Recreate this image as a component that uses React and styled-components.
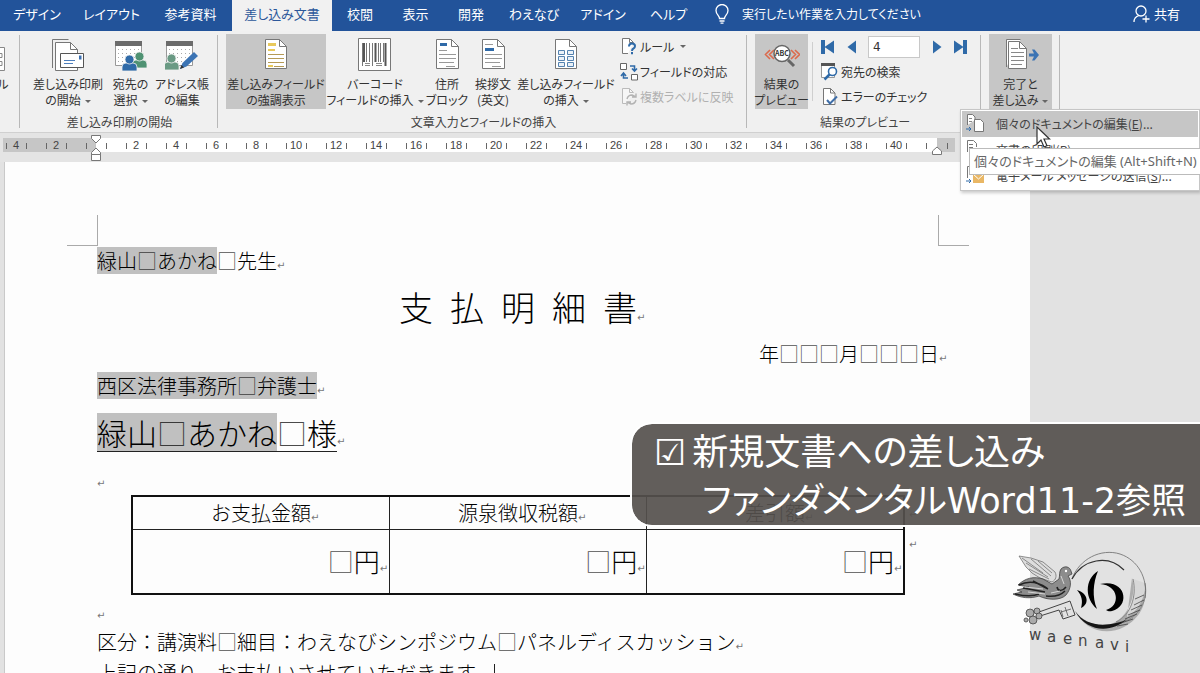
import React, { useState } from "react";
import styled, { createGlobalStyle } from "styled-components";

const TABS = [
  { name: "デザイン", width: 74 },
  { name: "レイアウト", width: 75 },
  { name: "参考資料", width: 83 },
  { name: "差し込み文書", width: 100 },
  { name: "校閲", width: 56 },
  { name: "表示", width: 55 },
  { name: "開発", width: 56 },
  { name: "わえなび", width: 70 },
  { name: "アドイン", width: 68 },
  { name: "ヘルプ", width: 63 },
];

const RULER_MARKS = Array.from({ length: 20 }, (_, i) => (i + 1) * 2);

/* ---------- icons ---------- */

const Sheet = ({ x = 0, y = 0, w = 21, h = 29 }) => (
  <>
    <path
      d={`M${x + 0.5} ${y + 0.5}h${w - 8}l7 7v${h - 8}h-${w - 1}z`}
      fill="#fff"
      stroke="#777"
    />
    <path
      d={`M${x + w - 7.5} ${y + 0.5}v7h7`}
      fill="none"
      stroke="#777"
    />
  </>
);

const Person = ({ x, y, color }) => (
  <g fill={color} stroke="#f0f0f0" strokeWidth="0.8">
    <path d={`M${x} ${y + 16}v-4q0-4 4-4h7q4 0 4 4v4z`} />
    <circle cx={x + 7.5} cy={y + 4.5} r="4.5" />
  </g>
);

const Grid = () => (
  <>
    <path d="M1.500 3.500h26v24h-26z" fill="#fff" stroke="#999" />
    <path d="M1 3h27v5H1z" fill="#6b6b6b" />
    <path
      d="M4 11.500h22M4 15.500h22M4 19.500h22M4 23.500h22"
      stroke="#aaa"
      strokeDasharray="1 3"
    />
  </>
);

const StartMergeIcon = () => (
  <svg width="34" height="34" viewBox="0 0 34 34">
    <path d="M1.500 30V1.500h16" fill="none" stroke="#777" />
    <path d="M4.500 32.500V4.500h15l7 7v21z" fill="#fff" stroke="#777" />
    <path d="M19.500 4.500v7h7" fill="none" stroke="#777" />
    <path d="M9.500 15.500h23v14h-23z" fill="#fff" stroke="#555" />
    <path d="M28 17.500h2.500v4H28z" fill="#3b6fb0" />
    <path d="M13 22.500h11M13 25.500h9" stroke="#4d7fbd" />
  </svg>
);

const RecipientsIcon = () => (
  <svg width="34" height="34" viewBox="0 0 34 34">
    <Grid />
    <Person x={18} y={14} color="#4f9273" />
    <Person x={8} y={17} color="#2f6aa8" />
  </svg>
);

const EditListIcon = () => (
  <svg width="34" height="34" viewBox="0 0 34 34">
    <Grid />
    <Person x={-1} y={16} color="#6a9a84" />
    <path d="M15 31l2.500-6L29 14l4 4-11.500 10.500z" fill="#3c74b4" />
    <path d="M15 31l1.500-4 2.500 2.500z" fill="#333" />
  </svg>
);

const HighlightIcon = () => (
  <svg width="34" height="34" viewBox="0 0 34 34">
    <Sheet x={6} y={1} w={22} h={30} />
    <path d="M9 5h8v3H9zM9 11h7v2H9z" fill="#e8c95c" />
    <path d="M9 16.500h16M9 20.500h16M9 24.500h16M15 28.500h10" stroke="#b59a55" />
    <path d="M9 27h5v2H9z" fill="#e8c95c" />
  </svg>
);

const BarcodeIcon = () => (
  <svg width="34" height="34" viewBox="0 0 34 34">
    <path d="M.5.5h32v32H.5z" fill="#fff" stroke="#777" />
    <path
      d="M6 5v19M17.500 5v19M27.500 5v23"
      stroke="#555"
      strokeWidth="2"
    />
    <path
      d="M8.500 5v19M11.500 5v19M14.500 5v23M20.500 5v19M22.500 5v19M25.500 5v19M4.500 5v23"
      stroke="#777"
    />
    <path d="M7 27.500h5M18 27.500h6M7 25.500h5M18 25.500h6" stroke="#888" />
  </svg>
);

const AddressIcon = () => (
  <svg width="34" height="34" viewBox="0 0 34 34">
    <Sheet x={6} y={1} w={23} h={30} />
    <path d="M10 5h7v3h-7z" fill="#2f6aa8" />
    <path d="M9 12.500h8M9 16.500h17M9 20.500h17M9 24.500h15M16 28.500h9" stroke="#999" />
  </svg>
);

const GreetingIcon = () => (
  <svg width="34" height="34" viewBox="0 0 34 34">
    <Sheet x={6} y={1} w={23} h={30} />
    <path d="M9 10h9v3H9z" fill="#2f6aa8" />
    <path d="M9 6.500h8M9 16.500h17M9 20.500h17M9 24.500h15M16 28.500h9" stroke="#999" />
  </svg>
);

const FieldIcon = () => (
  <svg width="34" height="34" viewBox="0 0 34 34">
    <Sheet x={6} y={1} w={22} h={30} />
    <path
      d="M9.500 12.500h6v4h-6zM18.500 12.500h6v4h-6zM9.500 18.500h6v4h-6zM18.500 18.500h6v4h-6zM9.500 24.500h6v4h-6zM18.500 24.500h6v4h-6z"
      fill="#eaf1f8"
      stroke="#5583b0"
    />
  </svg>
);

const PreviewIcon = () => (
  <svg width="36" height="34" viewBox="0 0 36 34">
    <path
      d="M6 12l-4.500 4.500L6 21M10 12l-4.500 4.500L10 21M27 12l4.500 4.500L27 21M31 12l4.500 4.500L31 21"
      fill="none"
      stroke="#dc6a4c"
      strokeWidth="1.600"
    />
    <path d="M24 22l6 6" stroke="#666" strokeWidth="3" />
    <circle cx="18" cy="15.500" r="8" fill="#fff" stroke="#666" strokeWidth="1.500" />
    <text x="18" y="18" textAnchor="middle" fontSize="7" fontWeight="700" fill="#333">
      ABC
    </text>
  </svg>
);

const FinishIcon = () => (
  <svg width="36" height="34" viewBox="0 0 36 34">
    <path d="M3.500 29V1.500h14" fill="#fff" stroke="#777" />
    <Sheet x={5} y={3} w={19} h={28} />
    <path d="M8 10.500h7M8 14.500h13M8 18.500h13M8 22.500h13M8 26.500h11" stroke="#888" />
    <path d="M26 15.500h5l-2-4h2.500l4.500 5.500-4.500 5.500H29l2-4h-5z" fill="#3c74b4" />
  </svg>
);

const RuleIcon = () => (
  <svg width="18" height="18" viewBox="0 0 18 18">
    <path d="M8 15.500H2.500V.5h7l4 4" fill="#fff" stroke="#777" />
    <path d="M9.500.5v4h4" fill="none" stroke="#777" />
    <path
      d="M9 8.500q0-3 3-3t3 2.500q0 1.800-1.500 2.500t-1.500 2.500M12 14v2.200"
      fill="none"
      stroke="#2f6aa8"
      strokeWidth="2"
    />
  </svg>
);

const MatchIcon = () => (
  <svg width="18" height="18" viewBox="0 0 18 18">
    <path d="M.5.5h6v6h-6zM11.500 11.500h6v5.500h-6z" fill="#fff" stroke="#666" />
    <path
      d="M10 3h4.500v4M12 5.500L14.500 8 17 5.500M8 15H3.500v-4M1 13l2.500-3L6 13"
      fill="none"
      stroke="#2f6aa8"
      strokeWidth="1.600"
    />
  </svg>
);

const LabelsIcon = () => (
  <svg width="18" height="18" viewBox="0 0 18 18">
    <path d="M6 15.500H2.500V.5h7l4 4" fill="#f6f6f6" stroke="#bbb" />
    <path d="M9.500.5v4h4" fill="none" stroke="#bbb" />
    <path
      d="M7 11q1-4 5-4l3 1.500M16 5.500v3.500h-4M16 12q-1 4-5 4l-3-1.500M7 17.500V14h4"
      fill="none"
      stroke="#b3b3b3"
      strokeWidth="1.400"
    />
  </svg>
);

const FindIcon = () => (
  <svg width="18" height="18" viewBox="0 0 18 18">
    <path d="M.5 1.500h13v13H.5z" fill="#fff" stroke="#999" />
    <path d="M0 0h14v3H0z" fill="#555" />
    <circle cx="11.500" cy="8.500" r="4" fill="#fff" stroke="#2f6aa8" strokeWidth="1.600" />
    <path d="M8.500 11.500L3.500 16.500" stroke="#2f6aa8" strokeWidth="2.500" />
  </svg>
);

const CheckIcon = () => (
  <svg width="18" height="18" viewBox="0 0 18 18">
    <path d="M2.500.5h7l4.500 4.500v11.500H2.500z" fill="#fff" stroke="#777" />
    <path d="M9.500.5V5H14" fill="none" stroke="#777" />
    <path d="M6 12l3 3.500 7-7" fill="none" stroke="#3f6ea8" strokeWidth="2" />
  </svg>
);

const NavIcon = ({ flip, bar }) => (
  <svg width="14" height="14" viewBox="0 0 14 14">
    <g fill="#2f6aa8" transform={flip ? "rotate(180 7 7)" : undefined}>
      {bar && <path d="M10 0h4v14h-4z" />}
      <path d={bar ? "M1 .5L10.500 7 1 13.500z" : "M3 .5L11.500 7 3 13.500z"} />
    </g>
  </svg>
);

const DocsIcon = () => (
  <svg width="20" height="20" viewBox="0 0 20 20">
    <path d="M2.500 12V1.500h5l2.500 2.500v3" fill="#fff" stroke="#777" />
    <path d="M4 5.500h3M4 8.500h3" stroke="#888" />
    <path d="M9.500 6.500h6l3 3v9h-9z" fill="#fff" stroke="#777" />
    <path d="M1 16h5M4 14l2 2-2 2" fill="none" stroke="#2f6aa8" />
  </svg>
);

const PrintIcon = () => (
  <svg width="20" height="20" viewBox="0 0 20 20">
    <path d="M2.500 13V1.500h6l3 3V8" fill="#fff" stroke="#777" />
    <path d="M4 5.500h4M4 8.500h4M8 12h9v5H8z" stroke="#777" fill="#eee" />
  </svg>
);

const MailIcon = () => (
  <svg width="20" height="20" viewBox="0 0 20 20">
    <path d="M2.500 13V1.500h6l3 3V8" fill="#fff" stroke="#777" />
    <path d="M1 16h5M4 14l2 2-2 2" fill="none" stroke="#2f6aa8" />
    <path d="M8 9h11v9H8z" fill="#e9b765" />
    <path d="M8 9l5.500 5L19 9" fill="none" stroke="#fff" />
  </svg>
);

const BulbIcon = () => (
  <svg width="16" height="20" viewBox="0 0 16 20" fill="none" stroke="#fff" strokeWidth="1.300">
    <path d="M5.500 14.500c0-3-3.500-4-3.500-8a6 6 0 0 1 12 0c0 4-3.500 5-3.500 8zM5.500 17h5M6.500 19.200h3" />
  </svg>
);

const ShareIcon = () => (
  <svg width="17" height="18" viewBox="0 0 17 18" fill="none" stroke="#fff" strokeWidth="1.300">
    <circle cx="8" cy="6" r="5" />
    <path d="M1 17q0-5 5-6.500M13 10.500v7M9.500 14h7" />
  </svg>
);

const IndentMarker = () => (
  <svg width="12" height="28" viewBox="0 0 12 28">
    <path
      d="M1.500 1.500h9v3L6 9 1.500 4.500zM6 14l4.500 4.500v2h-9v-2zM1.500 20.500h9v6h-9z"
      fill="#fff"
      stroke="#777"
    />
  </svg>
);

const RightMarker = () => (
  <svg width="12" height="10" viewBox="0 0 12 10">
    <path d="M6 1l4.500 4v3.500h-9V5z" fill="#fff" stroke="#777" />
  </svg>
);

const CursorIcon = () => (
  <svg width="15" height="23" viewBox="0 0 15 23">
    <path
      d="M1 1v17l4-4 3 7 3-1.300-3-6.700h5.500z"
      fill="#fff"
      stroke="#333"
      strokeWidth="1.200"
    />
  </svg>
);

const WaenaviLogo = () => (
  <svg width="136" height="110" viewBox="0 0 136 110">
    {/* coin */}
    <path
      d="M59 28C66 8 88-3 107 3c18 6 28 24 25 44"
      fill="none"
      stroke="#777"
      strokeWidth="0.900"
    />
    <path d="M59 28C70 8 95 3 111 19" fill="none" stroke="#333" strokeWidth="1.200" />
    <path
      d="M120 28c4 17-2 36-17 43 9 1 17-4 22-10 7-9 9-18 7-29"
      fill="#999"
      fillOpacity="0.150"
      stroke="#666"
      strokeWidth="0.700"
    />
    <path
      d="M119 27c5 18-4 40-21 46-13 3-27-1-36-13 9 18 30 26 49 16 15-8 23-22 21-38-2 13-8 22-18 28z"
      fill="#8a8a8a"
      opacity="0.600"
    />
    <path d="M62 60c9 13 24 16 41 12 5-1 8-2 11-4-15 14-40 14-52-8z" fill="#151515" />
    <path
      d="M131 44l-9 4M131 49l-10 5M129 54l-11 5M127 59l-12 5M124 63l-12 5M120 68l-12 4M115 73l-11 2"
      stroke="#333"
      strokeWidth="0.700"
    />
    {/* monogram */}
    <path d="M85 20c-14 9-13 28-1 38-5-12-4-26 1-38z" fill="#000" />
    <path d="M87 33c26-6 31 22 12 27-2 .5-4 .5-6-1 15-4 13-25-6-26z" fill="#000" />
    <path d="M64 39c11 3 13 14 4 18 2-7 1-12-4-18z" fill="#000" />
    {/* dove */}
    <path d="M6 5l7 11 6 6 8 5 12 4c4-2 5-6 3-10L30 11 18 7z" fill="#ddd" stroke="#666" strokeWidth="0.700" />
    <path
      d="M9 7l21 15M13 12l22 14M18 8l20 17M25 10l14 12M16 18l20 10"
      stroke="#666"
      strokeWidth="0.700"
      fill="none"
    />
    <path
      d="M5 34c7-7 16-9 25-6l9 5 7-5c1-4 0-7 2-10 4-4 9-2 10 2l1 3-4 2c4 5 3 13-2 19-6 6-19 5-27 1-9 3-18 2-26-2l9-2-5-2 12-3z"
      fill="#8c8c8c"
      stroke="#333"
      strokeWidth="0.700"
    />
    <path
      d="M6 34c10-5 19-3 28 3M10 37l22 4M2 43c9 2 17 3 24 0M20 30l15 8M44 36c1 5 6 4 9 0M33 45c8 1 14 0 19-5"
      stroke="#222"
      fill="none"
      strokeWidth="1.500"
    />
    <path d="M12 36l18 2M15 41l17 2M38 42l9-2M48 25l3 8" stroke="#ddd" strokeWidth="0.900" />
    <circle cx="53" cy="20" r="1.200" fill="#fff" />
    {/* key */}
    <path d="M26 61l31-11 5 14-12 4-4-9-19 6" fill="none" stroke="#444" strokeWidth="1" />
    <path d="M48 59l2 7M52 56l3 9M48 61l10-3" stroke="#555" strokeWidth="0.800" />
    <g fill="#aaa" stroke="#444" strokeWidth="0.800">
      <circle cx="17" cy="62" r="4" />
      <circle cx="24" cy="60" r="3" />
      <circle cx="20" cy="69" r="4" />
      <circle cx="26" cy="65" r="3" />
      <circle cx="13" cy="69" r="2" />
    </g>
    <text
      x="16 34 50 65 82 97 112"
      y="89 91 93 95 97 99 101"
      fontFamily='"DejaVu Sans", sans-serif'
      fontSize="15"
      fill="#444"
    >
      waenavi
    </text>
  </svg>
);

/* ---------- ribbon pieces ---------- */

function BigButton({ icon, lines, width, active, caret }) {
  return (
    <BigButtonBox $width={width} $active={active}>
      {icon}
      <BigLabel>
        {lines[0]}
        <br />
        {lines[1]}
        {caret && <Caret />}
      </BigLabel>
    </BigButtonBox>
  );
}

function SmallButton({ icon, label, disabled, caret }) {
  return (
    <SmallButtonBox disabled={disabled}>
      {icon}
      {label}
      {caret && <Caret />}
    </SmallButtonBox>
  );
}

function Ribbon() {
  const [record, setRecord] = useState("4");

  return (
    <RibbonBar>
      <Group $pad={0}>
        <GroupRow>
          <ClippedButton>
            <svg width="6" height="34" viewBox="0 0 6 34">
              <path
                d="M-2 9.500H4.500v23H-2M-2 15.500h4v4h-4M-2 23.500h4v4h-4"
                fill="#fff"
                stroke="#888"
              />
            </svg>
            ル
          </ClippedButton>
        </GroupRow>
      </Group>

      <Group $pad={7}>
        <GroupRow>
          <BigButton icon={<StartMergeIcon />} lines={["差し込み印刷", "の開始"]} width={82} caret />
          <BigButton icon={<RecipientsIcon />} lines={["宛先の", "選択"]} width={43} caret />
          <BigButton icon={<EditListIcon />} lines={["アドレス帳", "の編集"]} width={60} />
        </GroupRow>
        <GroupLabel>差し込み印刷の開始</GroupLabel>
      </Group>

      <Group $pad={8}>
        <GroupRow>
          <BigButton icon={<HighlightIcon />} lines={["差し込みフィールド", "の強調表示"]} width={100} active />
          <BigButton icon={<BarcodeIcon />} lines={["バーコード", "フィールドの挿入"]} width={98} caret />
          <BigButton icon={<AddressIcon />} lines={["住所", "ブロック"]} width={46} />
          <BigButton icon={<GreetingIcon />} lines={["挨拶文", "(英文)"]} width={46} />
          <BigButton icon={<FieldIcon />} lines={["差し込みフィールド", "の挿入"]} width={100} caret />
          <SmallColumn $width={125}>
            <SmallButton icon={<RuleIcon />} label="ルール" caret />
            <SmallButton icon={<MatchIcon />} label="フィールドの対応" />
            <SmallButton icon={<LabelsIcon />} label="複数ラベルに反映" disabled />
          </SmallColumn>
        </GroupRow>
        <GroupLabel>文章入力とフィールドの挿入</GroupLabel>
      </Group>

      <Group $pad={8}>
        <GroupRow>
          <BigButton icon={<PreviewIcon />} lines={["結果の", "プレビュー"]} width={53} active />
          <InnerRule />
          <SmallColumn $width={158}>
            <RecordNav>
              <NavButton aria-label="先頭のレコード"><NavIcon flip bar /></NavButton>
              <NavButton aria-label="前のレコード"><NavIcon flip /></NavButton>
              <RecordInput
                aria-label="レコード"
                value={record}
                onChange={(e) => setRecord(e.target.value)}
              />
              <NavButton aria-label="次のレコード"><NavIcon /></NavButton>
              <NavButton aria-label="最後のレコード"><NavIcon bar /></NavButton>
            </RecordNav>
            <SmallButton icon={<FindIcon />} label="宛先の検索" />
            <SmallButton icon={<CheckIcon />} label="エラーのチェック" />
          </SmallColumn>
        </GroupRow>
        <GroupLabel>結果のプレビュー</GroupLabel>
      </Group>

      <Group $pad={8}>
        <GroupRow>
          <BigButton icon={<FinishIcon />} lines={["完了と", "差し込み"]} width={63} active caret />
          <Menu>
            <MenuItem $active>
              <DocsIcon />
              <span>個々のドキュメントの編集(<u>E</u>)...</span>
            </MenuItem>
            <MenuItem>
              <PrintIcon />
              <span>文書の印刷(<u>P</u>)...</span>
            </MenuItem>
            <MenuItem>
              <MailIcon />
              <span>電子メール メッセージの送信(<u>S</u>)...</span>
            </MenuItem>
            <Tooltip role="tooltip">個々のドキュメントの編集 (Alt+Shift+N)</Tooltip>
            <Cursor><CursorIcon /></Cursor>
          </Menu>
        </GroupRow>
      </Group>
    </RibbonBar>
  );
}

function Ruler() {
  return (
    <RulerStrip>
      <RulerMargin $width={93} $end>
        {[4, 2].map((n) => (
          <RulerCell key={n}>{n}</RulerCell>
        ))}
        <RulerHalf />
      </RulerMargin>
      <RulerBody>
        <RulerHalf />
        {RULER_MARKS.map((n) => (
          <RulerCell key={n}>{n}</RulerCell>
        ))}
        <RulerHalf />
        <LeftIndent><IndentMarker /></LeftIndent>
        <RightIndent><RightMarker /></RightIndent>
      </RulerBody>
      <RulerMargin $width={18}>
        <RulerHalf />
      </RulerMargin>
    </RulerStrip>
  );
}

const Sp = () => <SpaceMark>□</SpaceMark>;
const Ret = () => <ReturnMark>↵</ReturnMark>;

function Document() {
  return (
    <Paper>
      <CropRow>
        <CropMark $side="right" />
        <CropMark $side="left" />
      </CropRow>
      <Line $height={30}>
        <Field>緑山<Sp />あかね</Field><Sp />先生<Ret />
      </Line>
      <Title>支&#8194;払&#8194;明&#8194;細&#8194;書<Ret /></Title>
      <Line $height={30} $align="right">
        年<Sp /><Sp /><Sp />月<Sp /><Sp /><Sp />日<Ret />
      </Line>
      <Line $height={34}>
        <Field>西区法律事務所<Sp />弁護士</Field><Ret />
      </Line>
      <Addressee>
        <Underlined><Field>緑山<Sp />あかね</Field><Sp />様</Underlined><Ret />
      </Addressee>
      <Line $height={32}><Ret /></Line>
      <TableRow>
        <PayTable>
          <thead>
            <tr>
              <th>お支払金額<Ret /></th>
              <th>源泉徴収税額<Ret /></th>
              <th>差引額<Ret /></th>
            </tr>
          </thead>
          <tbody>
            <tr>
              <td><Sp />円<Ret /></td>
              <td><Sp />円<Ret /></td>
              <td><Sp />円<Ret /></td>
            </tr>
          </tbody>
        </PayTable>
        <RowEnds>
          <Ret />
          <Ret />
        </RowEnds>
      </TableRow>
      <Line $height={32}><Ret /></Line>
      <Line $height={30}>
        区分：講演料<Sp />細目：わえなびシンポジウム<Sp />パネルディスカッション<Ret />
      </Line>
      <Line $height={32}>
        上記の通り、お支払いさせていただきます。<Caretline /><Ret />
      </Line>
    </Paper>
  );
}

function App() {
  const [activeTab, setActiveTab] = useState("差し込み文書");

  return (
    <Window>
      <GlobalStyle />
      <TabBar>
        {TABS.map((tab) => (
          <Tab
            key={tab.name}
            $width={tab.width}
            $active={tab.name === activeTab}
            onClick={() => setActiveTab(tab.name)}
          >
            {tab.name}
          </Tab>
        ))}
        <TellMe><BulbIcon />実行したい作業を入力してください</TellMe>
        <Share><ShareIcon />共有</Share>
      </TabBar>
      <Ribbon />
      <Ruler />
      <Workspace>
        <Document />
      </Workspace>
      <Caption>
        <CaptionFirst><span>☑</span>新規文書への差し込み</CaptionFirst>
        <CaptionSecond>ファンダメンタルWord11-2参照</CaptionSecond>
      </Caption>
      <Logo><WaenaviLogo /></Logo>
    </Window>
  );
}

export default App;

/* ---------- styles ---------- */

const GlobalStyle = createGlobalStyle`
  * {
    box-sizing: border-box;
  }
  body {
    margin: 0;
    overflow: hidden;
    background: #e2e2e2;
    font-family: "Noto Sans CJK JP", sans-serif;
  }
  button, input {
    font: inherit;
    color: inherit;
    border: 0;
    padding: 0;
    background: none;
  }
  svg {
    display: block;
    flex-shrink: 0;
  }
`;

const Window = styled.div`
  position: relative;
  display: flex;
  flex-direction: column;
  height: 100vh;
  overflow: hidden;
  font-size: 12px;
  font-feature-settings: "palt";
  color: #333;
`;

const TabBar = styled.div`
  display: flex;
  flex-shrink: 0;
  height: 31px;
  background: #22539a;
  color: #fff;
  font-size: 13px;
  white-space: nowrap;
`;

const Tab = styled.button`
  width: ${(props) => props.$width}px;
  padding-bottom: 4px;
  background: ${(props) => (props.$active ? "#f1f1f1" : "transparent")};
  color: ${(props) => (props.$active ? "#2b579a" : "#fff")};
`;

const TellMe = styled.button`
  display: flex;
  align-items: center;
  gap: 12px;
  margin-left: 14px;
  padding-bottom: 4px;
  font-size: 12px;
`;

const Share = styled(TellMe)`
  gap: 4px;
  margin-left: auto;
  margin-right: 20px;
  font-size: 13px;
`;

const RibbonBar = styled.div`
  display: flex;
  flex-shrink: 0;
  height: 102px;
  background: #f0f0f0;
  border-bottom: 1px solid #d0d0d0;
  white-space: nowrap;
`;

const Group = styled.div`
  position: relative;
  display: flex;
  flex-direction: column;
  padding: 3px 0 0 ${(props) => props.$pad}px;
  &:not(:last-child) {
    padding-right: 6px;
  }
  &:last-child {
    padding-right: 8px;
  }
  &::after {
    content: "";
    position: absolute;
    top: 4px;
    bottom: 4px;
    right: 0;
    width: 1px;
    background: #b8b8b8;
  }
`;

const GroupRow = styled.div`
  position: relative;
  display: flex;
  height: 75px;
`;

const GroupLabel = styled.div`
  margin-top: 4px;
  line-height: 18px;
  text-align: center;
  color: #444;
`;

const ClippedButton = styled.button`
  display: flex;
  flex-direction: column;
  justify-content: flex-start;
  gap: 4px;
  width: 14px;
  padding-top: 4px;
  line-height: 16px;
  text-indent: -8px;
  overflow: hidden;
`;

const BigButtonBox = styled.button`
  display: flex;
  flex-direction: column;
  align-items: center;
  gap: 4px;
  width: ${(props) => props.$width}px;
  padding-top: 4px;
  background: ${(props) => (props.$active ? "#c6c6c6" : "transparent")};
`;

const BigLabel = styled.span`
  line-height: 16px;
`;

const Caret = styled.span`
  display: inline-block;
  margin-left: 4px;
  vertical-align: 2px;
  border: 3px solid transparent;
  border-top-color: #666;
  border-bottom-width: 0;
`;

const SmallColumn = styled.div`
  display: flex;
  flex-direction: column;
  width: ${(props) => props.$width}px;
  padding-left: 4px;
`;

const SmallButtonBox = styled.button`
  display: flex;
  align-items: center;
  gap: 2px;
  height: 25px;
  &:disabled {
    color: #b0b0b0;
  }
`;

const InnerRule = styled.div`
  width: 1px;
  margin: 8px 4px;
  background: #cfcfcf;
`;

const RecordNav = styled.div`
  display: flex;
  align-items: center;
  justify-content: space-between;
  height: 25px;
  padding-right: 8px;
`;

const NavButton = styled.button`
  display: flex;
`;

const RecordInput = styled.input`
  width: 52px;
  height: 22px;
  padding: 0 4px;
  border: 1px solid #c8c8c8;
  background: #fff;
  font-family: "DejaVu Sans", sans-serif;
`;

const Menu = styled.div`
  position: absolute;
  z-index: 3;
  top: 75px;
  left: -29px;
  width: 240px;
  padding: 1px;
  border: 1px solid #c6c6c6;
  background: #fff;
  box-shadow: 1px 2px 3px rgba(0, 0, 0, 0.2);
  color: #444;
`;

const MenuItem = styled.button`
  display: flex;
  align-items: center;
  gap: 11px;
  width: 100%;
  height: 26px;
  padding: 0 0 2px 3px;
  background: ${(props) => (props.$active ? "#c6c6c6" : "transparent")};
`;

const Tooltip = styled.div`
  position: absolute;
  top: 38px;
  left: 8px;
  height: 27px;
  padding: 0 4px;
  border: 1px solid #bbb;
  background: #fff;
  color: #666;
  font-family: "Noto Sans", "Noto Sans CJK JP", sans-serif;
  font-size: 13px;
  line-height: 24px;
`;

const Cursor = styled.div`
  position: absolute;
  top: 16px;
  left: 75px;
`;

const RulerStrip = styled.div`
  display: flex;
  flex-shrink: 0;
  height: 29px;
  padding: 5px 0 10px 3px;
  background: #e4e4e4;
  color: #444;
  font-family: "Liberation Sans", sans-serif;
  font-size: 11px;
  line-height: 14px;
`;

const RulerMargin = styled.div`
  display: flex;
  flex-shrink: 0;
  justify-content: ${(props) => (props.$end ? "flex-end" : "flex-start")};
  width: ${(props) => props.$width}px;
  overflow: hidden;
  background: #c6c6c6;
`;

const RulerBody = styled.div`
  position: relative;
  display: flex;
  width: 841px;
  background: #fff;
`;

const RulerHalf = styled.div`
  flex: 0 0 20px;
  height: 6px;
  margin-top: 5px;
  background: linear-gradient(#666, #666) center / 1px 100% no-repeat;
`;

const RulerCell = styled.div`
  flex: 0 0 40px;
  text-align: center;
  background:
    linear-gradient(#666, #666) 10px 5px / 1px 6px no-repeat,
    linear-gradient(#666, #666) 30px 5px / 1px 6px no-repeat;
`;

const LeftIndent = styled.div`
  position: absolute;
  top: -4px;
  left: -6px;
`;

const RightIndent = styled.div`
  position: absolute;
  top: 8px;
  right: -6px;
`;

const Workspace = styled.div`
  flex: 1;
  min-height: 0;
  padding-left: 4px;
  overflow: hidden;
  background: #e2e2e2;
`;

const Paper = styled.div`
  max-width: 1026px;
  min-height: 100%;
  padding: 53px 91px 0 92px;
  border-left: 1px solid #c9c9c9;
  background: #fdfdfd;
  color: #000;
  font-size: 20px;
  font-weight: 300;
  font-feature-settings: normal;
  white-space: nowrap;
`;

const CropRow = styled.div`
  display: flex;
  justify-content: space-between;
  margin: 0 -30px;
`;

const CropMark = styled.div`
  width: 31px;
  height: 31px;
  border: 0 solid #aaa;
  border-bottom-width: 1px;
  border-${(props) => props.$side}-width: 1px;
`;

const Line = styled.div`
  height: ${(props) => props.$height}px;
  line-height: ${(props) => props.$height}px;
  text-align: ${(props) => props.$align || "left"};
`;

const Title = styled.h1`
  margin: 0;
  height: 63px;
  font-size: 34px;
  font-weight: 300;
  line-height: 62px;
  text-align: center;
`;

const Addressee = styled.div`
  height: 60px;
  font-size: 30px;
  line-height: 58px;
`;

const Underlined = styled.span`
  display: inline-block;
  line-height: 36px;
  border-bottom: 1px solid #222;
`;

const Field = styled.span`
  display: inline-block;
  line-height: 27px;
  background: #c0c0c0;
  ${Underlined} & {
    line-height: 38px;
  }
`;

const SpaceMark = styled.span`
  opacity: 0.7;
`;

const ReturnMark = styled.span`
  display: inline-block;
  width: 8px;
  margin-right: -8px;
  color: #777;
  font-family: "DejaVu Sans", sans-serif;
  font-size: 10px;
  font-weight: 400;
  line-height: 1;
`;

const TableRow = styled.div`
  display: flex;
  margin-left: 34px;
`;

const PayTable = styled.table`
  width: 774px;
  table-layout: fixed;
  border-collapse: collapse;
  border: 2px solid #111;
  th,
  td {
    padding: 0;
    border: 1px solid #222;
    font-weight: 300;
  }
  th {
    height: 33px;
    line-height: 30px;
  }
  td {
    height: 65px;
    padding-right: 9px;
    font-size: 26px;
    line-height: 60px;
    text-align: right;
  }
`;

const RowEnds = styled.div`
  display: flex;
  flex-direction: column;
  gap: 20px;
  padding: 15px 0 0 4px;
  line-height: 12px;
`;

const Caretline = styled.span`
  display: inline-block;
  width: 1px;
  height: 24px;
  background: #222;
  vertical-align: middle;
`;

const Caption = styled.div`
  position: absolute;
  z-index: 2;
  top: 422px;
  right: 0;
  width: 570px;
  padding: 5px 0 0 22px;
  border: 2px solid #fff;
  border-right: 0;
  border-radius: 22px 0 0 22px;
  background: rgba(85, 80, 77, 0.92);
  background-clip: padding-box;
  color: #fff;
  font-family: "DejaVu Sans", "Noto Sans CJK JP", sans-serif;
  line-height: 48px;
  white-space: nowrap;
`;

const CaptionFirst = styled.div`
  display: flex;
  gap: 6px;
  font-size: 36px;
`;

const CaptionSecond = styled.div`
  padding-left: 48px;
  font-size: 35px;
`;

const Logo = styled.div`
  position: absolute;
  top: 551px;
  left: 1013px;
`;
